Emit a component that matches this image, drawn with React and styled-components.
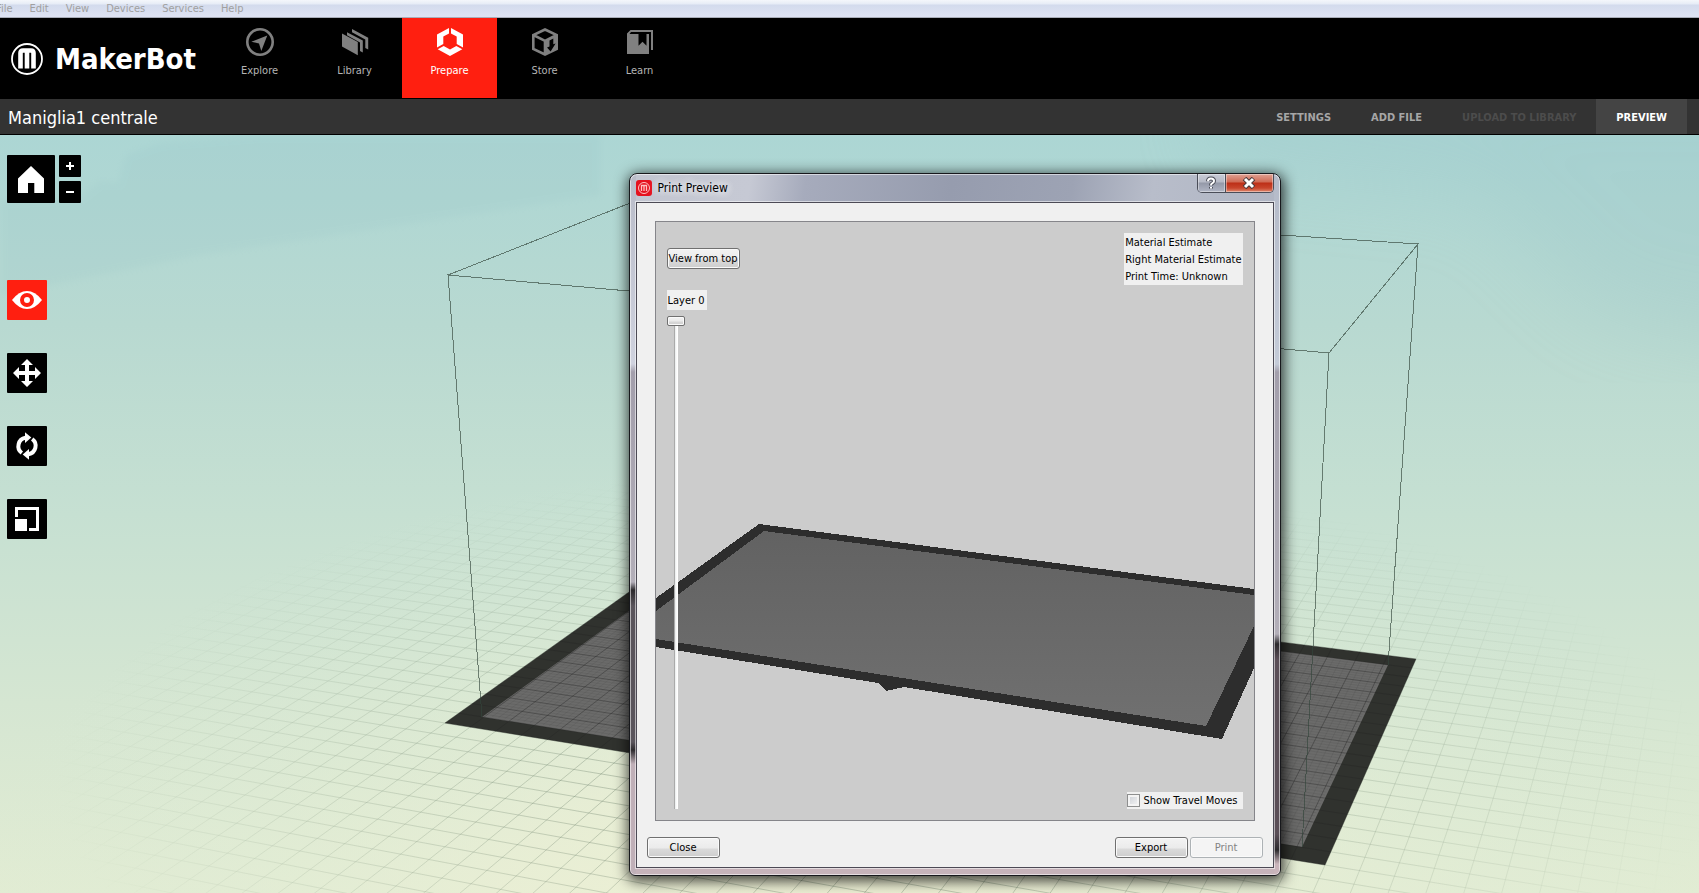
import React from 'react';
import styled, { createGlobalStyle } from 'styled-components';

const GlobalStyle = createGlobalStyle`
  *,
  *::before,
  *::after {
    box-sizing: border-box;
  }

  body {
    margin: 0;
    font-family: 'DejaVu Sans Condensed', 'DejaVu Sans', sans-serif;
    font-stretch: condensed;
    font-size: 11px;
    line-height: 17px;
    color: #000;
  }

  button {
    font: inherit;
    margin: 0;
    padding: 0;
    border: 0;
    cursor: pointer;
  }
`;

// App shell

const Page = styled.div`
  display: flex;
  flex-direction: column;
  min-height: 100vh;
  overflow: hidden;
`;

const MenuBar = styled.nav`
  display: flex;
  align-items: center;
  gap: 17px;
  height: 18px;
  margin-left: -4px;
  border-bottom: 1px solid #a9adb8;
  background: linear-gradient(#f4f7fb 0, #e6ecf6 4px, #d3dbed 5px, #dfe3f3 17px);
`;

const MenuItem = styled.button`
  background: none;
  color: #a0a0a0;
  line-height: 14px;
`;

const Header = styled.header`
  display: flex;
  height: 81px;
  background: #000;
`;

const Brand = styled.a`
  display: flex;
  align-items: center;
  gap: 12px;
  width: 212px;
  padding-left: 11px;
  color: #fff;
  font-size: 29px;
  font-weight: bold;
  line-height: 32px;
  text-decoration: none;
`;

const MainNav = styled.nav`
  display: flex;
`;

const NavLink = styled.a`
  display: flex;
  flex-direction: column;
  align-items: center;
  gap: 6px;
  width: 95px;
  height: 80px;
  padding-top: 10px;
  background: ${({ $active }) => ($active ? '#ff1f10' : 'transparent')};
  color: ${({ $active }) => ($active ? '#fff' : '#b4b4b4')};
  text-decoration: none;

  & svg {
    color: ${({ $active }) => ($active ? '#fff' : '#808080')};
  }
`;

const Toolbar = styled.div`
  display: flex;
  align-items: stretch;
  justify-content: space-between;
  height: 36px;
  padding: 0 12px 0 8px;
  background: #333;
  border-bottom: 1px solid #000;
`;

const FileTitle = styled.h1`
  margin: 0;
  color: #fff;
  font-size: 18px;
  font-weight: normal;
  line-height: 37px;
`;

const Actions = styled.div`
  display: flex;
`;

const Action = styled.button`
  padding: 1px 20px 0;
  background: ${({ $active }) => ($active ? '#444' : 'transparent')};
  color: ${({ $active }) => ($active ? '#fff' : '#a6a6a6')};
  font-weight: bold;

  &:disabled {
    color: #4c4c4c;
  }
`;

// Workspace

const Workspace = styled.main`
  position: relative;
  flex: 1;
  min-height: 758px;
  padding: 20px 7px;
  background: #d6e6d2;
`;

const Backdrop = styled.svg`
  position: absolute;
  inset: 0;
  width: 100%;
  height: 100%;
`;

const Tools = styled.div`
  position: relative;
  display: flex;
  flex-direction: column;
  gap: 77px;
  width: max-content;
`;

const ViewControls = styled.div`
  display: flex;
  gap: 4px;
`;

const ZoomControls = styled.div`
  display: flex;
  flex-direction: column;
  gap: 4px;
`;

const ToolList = styled.div`
  display: flex;
  flex-direction: column;
  gap: 33px;
`;

const ToolButton = styled.button`
  display: block;
  width: ${({ $size }) => $size}px;
  height: ${({ $size }) => $size}px;
  border-radius: 1px;
  background: ${({ $active }) => ($active ? '#ff1f10' : '#000')};
  color: #fff;

  & svg {
    display: block;
  }
`;

// Dialog

const Dialog = styled.section`
  position: absolute;
  top: 38px;
  left: calc(50% - 221px);
  width: 652px;
  padding: 0 6px 7px;
  border: 1px solid #17181c;
  border-radius: 8px 8px 6px 6px;
  background:
    linear-gradient(
        #b9bcc9 0,
        #cfd2de 190px,
        #a39fac 198px,
        #b3afb9 408px,
        #2c2a2d 416px,
        #5a555c 432px,
        #5a555c 568px,
        #2c2a2d 576px,
        #c0b0b8 590px
      )
      left / 6px 100% no-repeat,
    linear-gradient(
        #b4bac8 0,
        #c4cbd8 190px,
        #a39fac 198px,
        #b3afb9 460px,
        #2c2a2d 470px,
        #5a4e57 486px,
        #5a4e57 660px,
        #2c2a2d 676px,
        #c9b4bb 690px
      )
      right / 6px 100% no-repeat,
    linear-gradient(#c6b3ba, #c6b3ba) bottom / 100% 8px no-repeat,
    linear-gradient(
      98deg,
      #c3c6d1 0,
      #c6c9d4 120px,
      #a6abbc 175px,
      #969cae 320px,
      #9da3b4 440px,
      #b8bdca 520px,
      #aab0bf 100%
    );
  box-shadow:
    inset 0 0 0 1px rgba(255, 255, 255, 0.55),
    1px 3px 14px 2px rgba(0, 0, 0, 0.75);
`;

const TitleBar = styled.header`
  display: flex;
  align-items: center;
  gap: 6px;
  height: 28px;
`;

const DialogTitle = styled.h2`
  flex: 1;
  margin: 0;
  font-size: 12px;
  font-weight: normal;
  line-height: 17px;
  text-shadow:
    0 0 8px #fff,
    0 0 8px #fff;
`;

const WindowButtons = styled.div`
  display: flex;
  align-self: flex-start;
  overflow: hidden;
  border: 1px solid #4a4d58;
  border-top: 0;
  border-radius: 0 0 5px 5px;
`;

const WindowButton = styled.button`
  display: grid;
  place-items: center;
  width: ${({ $danger }) => ($danger ? 47 : 28)}px;
  height: 18px;
  background: ${({ $danger }) =>
    $danger
      ? 'linear-gradient(#e0a294, #cf6a54 8px, #bd2f17 9px, #c8452c 14px, #e08a70)'
      : 'linear-gradient(#c9ccd6, #b6bac6 8px, #9499a8 9px, #b0b5c4)'};
  box-shadow: inset 0 0 0 1px rgba(255, 255, 255, 0.4);
  border-right: ${({ $danger }) => ($danger ? '0' : '1px solid #4a4d58')};
`;

const DialogBody = styled.div`
  display: flex;
  flex-direction: column;
  gap: 16px;
  padding: 18px 10px 9px;
  border: 1px solid #4c4a55;
  background: #f0f0f0;
  box-shadow: 0 0 0 1px rgba(255, 255, 255, 0.55);
`;

const PreviewPane = styled.div`
  position: relative;
  display: flex;
  justify-content: space-between;
  height: 600px;
  margin: 0 8px;
  padding: 11px;
  border: 1px solid #85858a;
  background: #ccc;
`;

const LayerPanel = styled.div`
  position: relative;
  display: flex;
  flex-direction: column;
  align-items: flex-start;
  padding-top: 15px;
`;

const InfoPanel = styled.div`
  position: relative;
  display: flex;
  flex-direction: column;
  justify-content: space-between;
  align-items: flex-end;
`;

const Estimates = styled.div`
  padding: 1px 1px 0;
  background: #f0f0f0;
  white-space: nowrap;
`;

const PushButton = styled.button`
  width: 73px;
  height: 21px;
  padding-top: 1px;
  border: 1px solid #707070;
  border-radius: 3px;
  background: linear-gradient(#f3f3f3, #ebebeb 10px, #dadada 11px, #cdcdcd);
  box-shadow: inset 0 0 0 1px #fafafa;
  line-height: 18px;
  white-space: nowrap;

  &:disabled {
    border-color: #adb2b5;
    background: #f4f4f4;
    color: #838383;
  }
`;

const LayerLabel = styled.label`
  margin: 21px 0 6px;
  padding: 2px 2px 0 1px;
  background: #f0f0f0;
  line-height: 18px;
`;

const LayerSlider = styled.input`
  flex: 1;
  width: 18px;
  min-height: 0;
  margin: 0;
  appearance: none;
  writing-mode: vertical-lr;
  background: linear-gradient(90deg, #aaa 1px, #e7eaea 1px, #fff 3px, #fff 4px)
    7px 0 / 4px 100% no-repeat;

  &::-webkit-slider-thumb {
    appearance: none;
    width: 18px;
    height: 10px;
    border: 1px solid #707070;
    border-radius: 2px;
    background: linear-gradient(#f3f3f3, #ebebeb 4px, #d8d8d8 5px, #d0d0d0);
    box-shadow: inset 0 0 0 1px #fafafa;
  }
`;

const TravelToggle = styled.label`
  display: flex;
  align-items: center;
  gap: 4px;
  width: 116px;
  background: #f0f0f0;
  white-space: nowrap;
`;

const Checkbox = styled.input`
  appearance: none;
  width: 13px;
  height: 13px;
  margin: 0;
  border: 1px solid #8e8f8f;
  background: linear-gradient(135deg, #cbcfd5, #f6f6f6);
  box-shadow: inset 0 0 0 2px #f4f4f4;
`;

const DialogFooter = styled.footer`
  display: flex;
  justify-content: space-between;
`;

const ButtonGroup = styled.div`
  display: flex;
  gap: 2px;
`;

// Icons

const LogoMark = ({ size }) => (
  <svg width={size} height={size} viewBox="0 0 32 32" fill="none" stroke="currentColor">
    <circle cx="16" cy="16" r="15" strokeWidth="1.8" />
    <path
      d="M9.5 25.500V10Q9.500 7.500 12 7.500H20Q22.500 7.500 22.500 10V25.500M16 8V25.500"
      strokeWidth="4.6"
    />
  </svg>
);

const ExploreIcon = () => (
  <svg width="28" height="28" viewBox="0 0 28 28" fill="currentColor">
    <circle cx="14" cy="14" r="12.700" fill="none" stroke="currentColor" strokeWidth="2.600" />
    <path d="M21.300 7.500 15.300 23 13 15.500 5.300 13.700Z" />
  </svg>
);

const LibraryIcon = () => (
  <svg width="28" height="28" viewBox="0 0 28 28" fill="currentColor">
    <path d="M1 5.500 16.800 14V27.200L1 18.500Z" />
    <path d="M6 4.200 21.800 12.600V24.400L19 23V14.500L6 7.200Z" />
    <path d="M11 1 27.200 9.800V21.500L24.300 20V11.600L11 4.300Z" />
  </svg>
);

const PrepareIcon = () => (
  <svg width="28" height="28" viewBox="0 0 28 28" fill="currentColor">
    <path d="M13 0V5.500L7.300 8.500V16L1 19.500V6.500Z" />
    <path d="M15 0V5.500L20.700 8.500V16L27 19.500V6.500Z" />
    <path d="M1.700 21.300 7.700 18 14 21.500 20.300 18 26.300 21.300 14 28Z" />
  </svg>
);

const StoreIcon = () => (
  <svg width="28" height="28" viewBox="0 0 28 28" fill="none" stroke="currentColor">
    <path d="M14 1.500 25.700 7V21L14 26.500 2.300 21V7ZM2.300 7 14 12.800 25.700 7M14 12.800V26.500" strokeWidth="2.600" />
    <path d="M14 12.800 26 7V21L14 27Z" fill="currentColor" stroke="none" />
    <path d="M18.500 12.500 22.300 10.600V16.200L24.600 15.600 19.600 23.500 16 19.600 18.500 18.400Z" fill="#000" stroke="none" />
  </svg>
);

const LearnIcon = () => (
  <svg width="28" height="28" viewBox="0 0 28 28" fill="currentColor">
    <path d="M1 5.500 4.500 2H27V22H25V4H5L3.500 6H12.500V17.800L16.500 13.800 20.500 17.800V6H23V26H1Z" />
  </svg>
);

const HomeIcon = () => (
  <svg width="48" height="48" viewBox="0 0 48 48" fill="currentColor">
    <path d="M24 11 37 23.500V38H27.300V28H21V38H11V23.500Z" />
  </svg>
);

const PlusIcon = () => (
  <svg width="22" height="22" viewBox="0 0 22 22" fill="currentColor">
    <path d="M7 10H10V7H12V10H15V12H12V15H10V12H7Z" />
  </svg>
);

const MinusIcon = () => (
  <svg width="22" height="22" viewBox="0 0 22 22" fill="currentColor">
    <path d="M7 10H15V12H7Z" />
  </svg>
);

const EyeIcon = () => (
  <svg width="40" height="40" viewBox="0 0 40 40" fill="currentColor">
    <path d="M5 20Q12 11 20 11T35 20Q28 29 20 29T5 20Z" />
    <circle cx="20" cy="20" r="5" fill="none" stroke="#ff1f10" strokeWidth="4" />
  </svg>
);

const MoveIcon = () => (
  <svg width="40" height="40" viewBox="0 0 40 40" fill="currentColor">
    <path d="M20 6 26 12H22V18H28V14L34 20 28 26V22H22V28H26L20 34 14 28H18V22H12V26L6 20 12 14V18H18V12H14Z" />
  </svg>
);

const RotateIcon = () => (
  <svg width="40" height="40" viewBox="0 0 40 40" fill="currentColor">
    <g fill="none" stroke="currentColor" strokeWidth="4">
      <path d="M14.800 27A8.500 8.500 0 0 1 18.500 11.800" />
      <path d="M25.200 13A8.500 8.500 0 0 1 21.500 28.200" />
    </g>
    <path d="M18 6.200 24.300 11.500 18 17Z" />
    <path d="M22 33.800 15.700 28.500 22 23Z" />
  </svg>
);

const ScaleIcon = () => (
  <svg width="40" height="40" viewBox="0 0 40 40" fill="currentColor">
    <path d="M8 8H32V32H22V29H29V11H11V18H8Z" />
    <path d="M8 20H20V32H8Z" />
  </svg>
);

const HelpGlyph = () => (
  <svg width="12" height="14" viewBox="0 0 12 14" fill="none">
    <path d="M3 5.200Q3 2.500 6 2.500T9 5Q9 6.500 7.500 7.200T6 9V9.400M6 11V12.600" stroke="#4b4e58" strokeWidth="4" />
    <path d="M3 5.200Q3 2.500 6 2.500T9 5Q9 6.500 7.500 7.200T6 9V9.400M6 11V12.600" stroke="#fff" strokeWidth="2" />
  </svg>
);

const CloseGlyph = () => (
  <svg width="14" height="12" viewBox="0 0 14 12" fill="none">
    <path d="M2.500 1.500 11.500 10.500M11.500 1.500 2.500 10.500" stroke="#4b3a3c" strokeWidth="5" />
    <path d="M3 2 11 10M11 2 3 10" stroke="#fff" strokeWidth="3" />
  </svg>
);

const AppIcon = () => (
  <svg width="16" height="16" viewBox="0 0 16 16" fill="none">
    <rect width="16" height="16" rx="3" fill="#e5121f" />
    <circle cx="8" cy="8" r="5.500" stroke="#ffc2c2" />
    <path d="M5.500 11V5.500H10.500V11M8 6V11" stroke="#ffc2c2" strokeWidth="1.300" />
  </svg>
);

// Ground plane: maps plate coordinates (0..1 on each side) onto the screen

const PLATE = [
  [445, 588],
  [1325, 730],
  [1416, 524],
  [667, 430],
];

const makeProjection = ([a, b, c, d]) => {
  const [x1, y1] = [b[0] - c[0], b[1] - c[1]];
  const [x2, y2] = [d[0] - c[0], d[1] - c[1]];
  const [sx, sy] = [a[0] - b[0] + c[0] - d[0], a[1] - b[1] + c[1] - d[1]];
  const den = x1 * y2 - x2 * y1;
  const g = (sx * y2 - x2 * sy) / den;
  const h = (x1 * sy - sx * y1) / den;

  return (u, v) => {
    const w = g * u + h * v + 1;
    const x = ((b[0] - a[0] + g * b[0]) * u + (d[0] - a[0] + h * d[0]) * v + a[0]) / w;
    const y = ((b[1] - a[1] + g * b[1]) * u + (d[1] - a[1] + h * d[1]) * v + a[1]) / w;
    return `${x.toFixed(1)} ${y.toFixed(1)}`;
  };
};

const project = makeProjection(PLATE);

const gridPath = (cols, rows, [u0, u1], [v0, v1]) => {
  const parts = [];
  for (let i = Math.ceil(u0 * cols); i <= u1 * cols; i += 1) {
    parts.push(`M${project(i / cols, v0)}L${project(i / cols, v1)}`);
  }
  for (let j = Math.ceil(v0 * rows); j <= v1 * rows; j += 1) {
    parts.push(`M${project(u0, j / rows)}L${project(u1, j / rows)}`);
  }
  return parts.join('');
};

const GROUND_GRID = gridPath(30, 19, [-0.9, 1.9], [-1.4, 2.5]);
const FINE_GRID = gridPath(120, 76, [0.03, 0.97], [0.06, 0.94]);
const PLATE_GRID = gridPath(30, 19, [0, 1], [0, 1]);
const PLATE_OUTER = `M${PLATE.map((p) => p.join(' ')).join('L')}Z`;
const PLATE_INNER = 'M482 582 1302 712 1388 530 680 439Z';

const Scene = () => (
  <Backdrop viewBox="0 0 1699 758" preserveAspectRatio="xMidYMid slice" aria-hidden="true">
    <defs>
      <linearGradient id="sky" x1="0" y1="0" x2="0" y2="1">
        <stop offset="0" stopColor="#acd6d4" />
        <stop offset="0.25" stopColor="#b8d9d1" />
        <stop offset="0.5" stopColor="#c6e0d2" />
        <stop offset="0.75" stopColor="#d5e6d2" />
        <stop offset="1" stopColor="#e2ecd3" />
      </linearGradient>
      <radialGradient
        id="floor"
        gradientTransform="translate(850 800) scale(900 480)"
        gradientUnits="userSpaceOnUse"
        cx="0"
        cy="0"
        r="1"
      >
        <stop offset="0" stopColor="#f0f1d5" />
        <stop offset="0.4" stopColor="#ebefd5" stopOpacity="0.7" />
        <stop offset="1" stopColor="#d8ead6" stopOpacity="0" />
      </radialGradient>
      <radialGradient
        id="fade"
        gradientTransform="translate(885 650) scale(830 320)"
        gradientUnits="userSpaceOnUse"
        cx="0"
        cy="0"
        r="1"
      >
        <stop offset="0.3" stopColor="#fff" />
        <stop offset="1" stopColor="#000" />
      </radialGradient>
      <mask id="gridMask">
        <rect width="1699" height="758" fill="url(#fade)" />
      </mask>
      <filter id="soft">
        <feGaussianBlur stdDeviation="3" />
      </filter>
      <filter id="haze">
        <feGaussianBlur stdDeviation="40" />
      </filter>
    </defs>
    <rect width="1699" height="758" fill="url(#sky)" />
    <g fill="#8fbcc2">
      <path
        d="M0 66 80 62 100 46 118 48 126 20 160 8 260 0H600V60L200 120 0 160Z"
        opacity="0.12"
        filter="url(#soft)"
      />
      <path d="M1200 -60H1800V220L1600 180 1480 60 1200 30Z" opacity="0.2" filter="url(#haze)" />
    </g>
    <rect width="1699" height="758" fill="url(#floor)" />
    <path
      d={GROUND_GRID}
      mask="url(#gridMask)"
      fill="none"
      stroke="#4c6350"
      strokeOpacity="0.3"
    />
    <path d={PLATE_OUTER} fill="#30322e" />
    <path d={PLATE_INNER} fill="#6b6b6a" />
    <path d={FINE_GRID} fill="none" stroke="#333" strokeOpacity="0.1" />
    <path d={PLATE_GRID} fill="none" stroke="#222" strokeOpacity="0.3" />
    <path
      d="M482 582 448 140 1329 218 1302 712M1329 218 1418 109 1388 530M448 140 653 59 1418 109"
      fill="none"
      stroke="#33453b"
      strokeOpacity="0.65"
      shapeRendering="crispEdges"
    />
  </Backdrop>
);

const PreviewScene = () => (
  <Backdrop viewBox="0 0 598 598" aria-hidden="true">
    <defs>
      <linearGradient id="plate" x1="0" y1="0" x2="0" y2="1">
        <stop offset="0" stopColor="#626262" />
        <stop offset="1" stopColor="#707070" />
      </linearGradient>
    </defs>
    <g shapeRendering="crispEdges">
      <path d="M0 376 103 302 598 367V446L566 517 248 465 230 469 222 461 0 425Z" fill="#2d2d2d" />
      <path d="M0 389 108 309 598 373V404L550 504 0 417Z" fill="url(#plate)" />
    </g>
  </Backdrop>
);

// Content

const MENU = ['File', 'Edit', 'View', 'Devices', 'Services', 'Help'];

const SECTIONS = [
  { label: 'Explore', Icon: ExploreIcon },
  { label: 'Library', Icon: LibraryIcon },
  { label: 'Prepare', Icon: PrepareIcon, active: true },
  { label: 'Store', Icon: StoreIcon },
  { label: 'Learn', Icon: LearnIcon },
];

const ACTIONS = [
  { label: 'SETTINGS' },
  { label: 'ADD FILE' },
  { label: 'UPLOAD TO LIBRARY', disabled: true },
  { label: 'PREVIEW', active: true },
];

const TOOLS = [
  { label: 'Look', Icon: EyeIcon, active: true },
  { label: 'Move', Icon: MoveIcon },
  { label: 'Turn', Icon: RotateIcon },
  { label: 'Scale', Icon: ScaleIcon },
];

const PrintPreview = () => (
  <Dialog role="dialog" aria-labelledby="preview-title">
    <TitleBar>
      <AppIcon />
      <DialogTitle id="preview-title">Print Preview</DialogTitle>
      <WindowButtons>
        <WindowButton type="button" aria-label="Help">
          <HelpGlyph />
        </WindowButton>
        <WindowButton type="button" aria-label="Close window" $danger>
          <CloseGlyph />
        </WindowButton>
      </WindowButtons>
    </TitleBar>
    <DialogBody>
      <PreviewPane>
        <PreviewScene />
        <LayerPanel>
          <PushButton type="button">View from top</PushButton>
          <LayerLabel htmlFor="layer">Layer 0</LayerLabel>
          <LayerSlider id="layer" type="range" min="0" max="100" defaultValue="0" />
        </LayerPanel>
        <InfoPanel>
          <Estimates>
            <div>Material Estimate</div>
            <div>Right Material Estimate</div>
            <div>Print Time: Unknown</div>
          </Estimates>
          <TravelToggle>
            <Checkbox type="checkbox" />
            Show Travel Moves
          </TravelToggle>
        </InfoPanel>
      </PreviewPane>
      <DialogFooter>
        <PushButton type="button">Close</PushButton>
        <ButtonGroup>
          <PushButton type="button">Export</PushButton>
          <PushButton type="button" disabled>
            Print
          </PushButton>
        </ButtonGroup>
      </DialogFooter>
    </DialogBody>
  </Dialog>
);

const App = () => (
  <>
    <GlobalStyle />
    <Page>
      <MenuBar>
        {MENU.map((item) => (
          <MenuItem key={item} type="button">
            {item}
          </MenuItem>
        ))}
      </MenuBar>
      <Header>
        <Brand href="#home">
          <LogoMark size={32} />
          MakerBot
        </Brand>
        <MainNav>
          {SECTIONS.map(({ label, Icon, active }) => (
            <NavLink key={label} href={`#${label.toLowerCase()}`} $active={active}>
              <Icon />
              {label}
            </NavLink>
          ))}
        </MainNav>
      </Header>
      <Toolbar>
        <FileTitle>Maniglia1 centrale</FileTitle>
        <Actions>
          {ACTIONS.map(({ label, active, disabled }) => (
            <Action key={label} type="button" disabled={disabled} $active={active}>
              {label}
            </Action>
          ))}
        </Actions>
      </Toolbar>
      <Workspace>
        <Scene />
        <Tools>
          <ViewControls>
            <ToolButton type="button" aria-label="Home view" $size={48}>
              <HomeIcon />
            </ToolButton>
            <ZoomControls>
              <ToolButton type="button" aria-label="Zoom in" $size={22}>
                <PlusIcon />
              </ToolButton>
              <ToolButton type="button" aria-label="Zoom out" $size={22}>
                <MinusIcon />
              </ToolButton>
            </ZoomControls>
          </ViewControls>
          <ToolList>
            {TOOLS.map(({ label, Icon, active }) => (
              <ToolButton key={label} type="button" aria-label={label} $size={40} $active={active}>
                <Icon />
              </ToolButton>
            ))}
          </ToolList>
        </Tools>
        <PrintPreview />
      </Workspace>
    </Page>
  </>
);

export default App;
